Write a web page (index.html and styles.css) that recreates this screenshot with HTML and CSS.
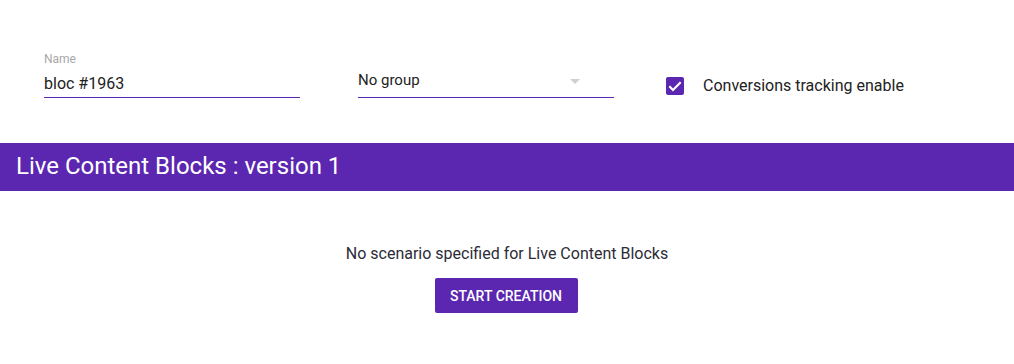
FILE: index.html
```html
<!DOCTYPE html>
<html lang="en">
<head>
  <meta charset="UTF-8">
  <title>Live Content Blocks</title>
  <link rel="stylesheet" href="styles.css">
</head>
<body>
  <!-- Block settings -->
  <div class="form-row">
    <div class="field">
      <label class="field-label">Name</label>
      <div class="field-input">bloc #1963</div>
    </div>

    <div class="field select-field">
      <div class="select">
        <span>No group</span>
        <span class="arrow"></span>
      </div>
    </div>

    <div class="check-field">
      <span class="checkbox">
        <svg width="16" height="16" viewBox="0 0 24 24">
          <path d="M3.5 12.5l5.5 5.5L20.5 6.5" fill="none" stroke="#fff" stroke-width="3.2"/>
        </svg>
      </span>
      <span class="check-label">Conversions tracking enable</span>
    </div>
  </div>

  <!-- Versions -->
  <div class="version-bar">Live Content Blocks : version 1</div>

  <div class="empty">
    <p>No scenario specified for Live Content Blocks</p>
    <button class="start-btn">START CREATION</button>
  </div>
</body>
</html>
```

FILE: styles.css
```css
body {
  font-family: Roboto, "Liberation Sans", sans-serif;
  background-color: #fff;
  color: #222;
  margin: 0;
}

.form-row {
  display: flex;
  align-items: flex-end;
  padding: 52px 0 0 44px;
  margin-bottom: 45px;
}

.field {
  width: 256px;
  margin-right: 58px;
}

.field-label {
  display: block;
  font-size: 12px;
  line-height: 14px;
  color: #a8a8a8;
}

.field-input {
  margin-top: 2px;
  height: 30px;
  padding-top: 3px;
  line-height: 26px;
  font-size: 16px;
  border-bottom: 1px solid #5c27b0;
  box-sizing: border-box;
}

.select {
  display: flex;
  justify-content: space-between;
  align-items: center;
  font-size: 15px;
  line-height: 20px;
  padding: 0 34px 7px 0;
  border-bottom: 1px solid #5c27b0;
}

.select .arrow {
  width: 0;
  height: 0;
  border-left: 5px solid transparent;
  border-right: 5px solid transparent;
  border-top: 5px solid #d0d0d0;
  margin-top: 2px;
}

.check-field {
  display: flex;
  align-items: center;
  margin-left: -6px;
  margin-bottom: 3px;
}

.checkbox {
  display: flex;
  align-items: center;
  justify-content: center;
  width: 18px;
  height: 18px;
  border-radius: 2px;
  background-color: #5c27b0;
}

.check-label {
  margin-left: 19px;
  font-size: 16px;
  color: #222;
}

.version-bar {
  background-color: #5c27b0;
  color: #fff;
  height: 48px;
  line-height: 46px;
  padding-left: 16px;
  font-size: 24px;
}

.empty {
  text-align: center;
}

.empty p {
  margin: 53px 0 14px;
  font-size: 16px;
  line-height: 20px;
  color: #2c2c38;
}

.start-btn {
  font-family: Roboto, "Liberation Sans", sans-serif;
  background-color: #5c27b0;
  color: #fff;
  border: none;
  border-radius: 2px;
  width: 143px;
  height: 35px;
  margin-right: 2px;
  font-size: 14px;
  font-weight: 500;
  cursor: pointer;
}
```
